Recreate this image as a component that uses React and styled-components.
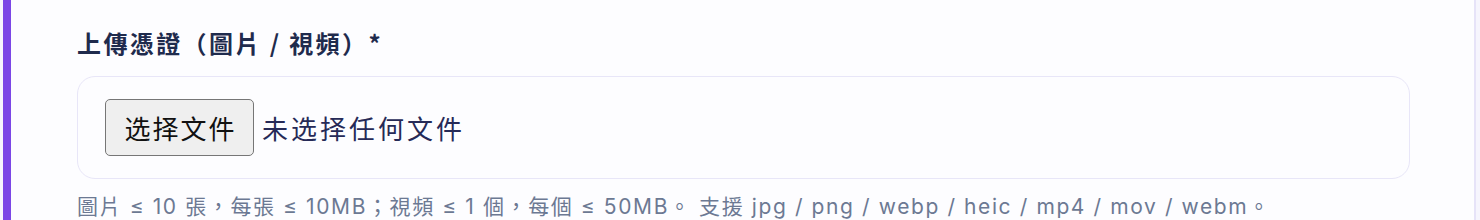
import React from 'react'
import styled, { createGlobalStyle } from 'styled-components'

const GlobalStyle = createGlobalStyle`
  html, body {
    margin: 0;
    padding: 0;
    background: #f6f5fd;
  }
  * {
    box-sizing: border-box;
  }
`

const Card = styled.section`
  margin-left: 3px;
  width: 1473px;
  height: 220px;
  background: #fdfdff;
  border-right: 2px solid #e6e3f8;
  border-left: 8px solid #7b46e6;
  padding: 27px 64px 0 66px;
  font-family: Inter, 'Noto Sans CJK TC', 'Noto Sans CJK SC', sans-serif;
`

const Label = styled.label`
  display: block;
  font-size: 24px;
  line-height: 32px;
  font-weight: 700;
  letter-spacing: 2.4px;
  color: #1f2b4d;
  font-family: 'Noto Sans CJK TC', sans-serif;
`

const DropBox = styled.div`
  margin-top: 17px;
  width: 1333px;
  height: 103px;
  display: flex;
  align-items: center;
  padding-left: 27px;
  border: 1.5px solid #e8e6f8;
  border-radius: 18px;
  background: #fdfdff;
`

const FileButton = styled.button`
  width: 149px;
  height: 57px;
  padding: 0;
  background: #efefef;
  border: 1.5px solid #767676;
  border-radius: 5px;
  color: #111;
  font-family: 'Noto Sans CJK SC', sans-serif;
  font-size: 26px;
  letter-spacing: 2px;
  text-indent: 2px;
  cursor: pointer;
`

const FileName = styled.span`
  margin-left: 8px;
  font-family: 'Noto Sans CJK SC', sans-serif;
  font-size: 26px;
  letter-spacing: 3px;
  color: #262a57;
`

const Hint = styled.p`
  margin: 14px 0 0;
  font-size: 21px;
  line-height: 28px;
  color: #6c7993;
  letter-spacing: 1.6px;
  white-space: nowrap;
`

export default function App() {
  return (
    <>
      <GlobalStyle />
      <Card>
        <Label>上傳憑證（圖片 / 視頻）*</Label>
        <DropBox>
          <FileButton type="button">选择文件</FileButton>
          <FileName>未选择任何文件</FileName>
        </DropBox>
        <Hint>
          圖片 ≤ 10 張，每張 ≤ 10MB；視頻 ≤ 1 個，每個 ≤ 50MB。 支援 jpg / png / webp / heic / mp4 / mov / webm。
        </Hint>
      </Card>
    </>
  )
}
